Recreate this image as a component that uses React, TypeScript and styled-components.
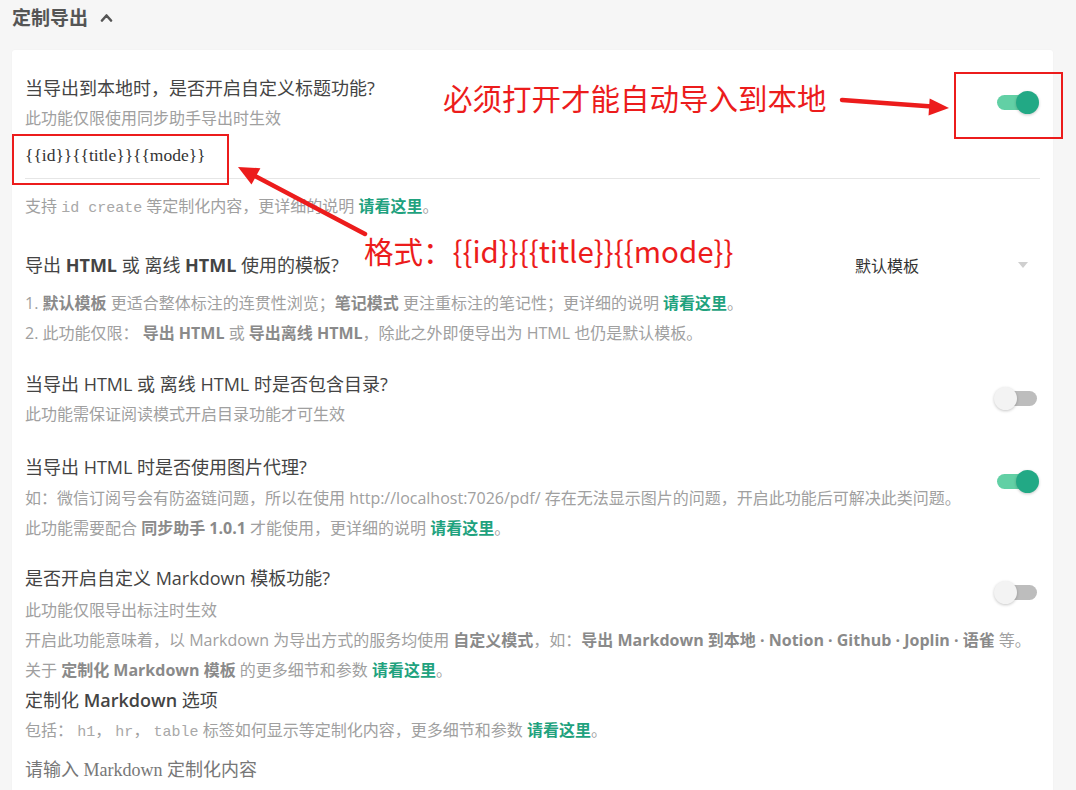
import React from "react";
import styled, { createGlobalStyle } from "styled-components";

const Global = createGlobalStyle`
  html, body { margin: 0; padding: 0; }
  body {
    background: #f6f6f6;
    font-family: "Open Sans", "Noto Sans CJK SC", sans-serif;
    -webkit-font-smoothing: antialiased;
  }
`;

const Page = styled.div`
  position: relative;
  width: 1076px;
  height: 790px;
  overflow: hidden;
`;

const Header = styled.div`
  display: flex;
  align-items: center;
  gap: 12px;
  height: 34px;
  padding: 0 12px;
  font-size: 19px;
  font-weight: 700;
  color: #555;
`;

const Card = styled.div`
  margin: 16px 23px 0 12px;
  padding: 23px 13px 0;
  background: #fff;
  border-radius: 3px;
  box-shadow: 0 0 2px rgba(0, 0, 0, 0.04);
  height: 800px;
`;

const Row = styled.div<{ $gap?: number }>`
  display: flex;
  align-items: flex-start;
  margin-top: ${(p) => p.$gap ?? 0}px;
`;

const Main = styled.div`
  flex: 1;
  min-width: 0;
`;

const Title = styled.div`
  font-size: 18px;
  line-height: 30px;
  color: #444;
  white-space: nowrap;
  b { font-weight: 700; }
`;

const Sub = styled.div<{ $gap?: number }>`
  margin-top: ${(p) => p.$gap ?? 0}px;
  font-size: 16px;
  line-height: 30px;
  color: #a0a0a0;
  white-space: nowrap;
  b { font-weight: 700; color: #8a8a8a; }
`;

const List = styled.ol`
  margin: 8px 0 0;
  padding: 0;
  list-style: none;
`;

const Code = styled.code`
  font-family: "Liberation Mono", "DejaVu Sans Mono", monospace;
  font-size: 15px;
  color: #a8a8a8;
`;

const Link = styled.a`
  color: #1fa27e;
  font-weight: 700;
  text-decoration: none;
`;

const InputLine = styled.div`
  height: 45px;
  display: flex;
  align-items: center;
  border-bottom: 1px solid #e6e6e6;
  font-family: "Liberation Serif", "Noto Sans CJK SC", serif;
  font-size: 17.5px;
  color: #333;
`;

const SwitchBox = styled.div`
  flex: none;
  width: 46px;
  height: 58px;
  padding-right: 3px;
  display: flex;
  align-items: center;
  justify-content: flex-end;
`;

const Track = styled.div<{ $on: boolean }>`
  position: relative;
  width: 40px;
  height: 15px;
  border-radius: 8px;
  background: ${(p) => (p.$on ? "#62d0a5" : "#bdbdbd")};
`;

const Thumb = styled.div<{ $on: boolean }>`
  position: absolute;
  top: 50%;
  left: ${(p) => (p.$on ? "19px" : "-3px")};
  width: 23px;
  height: 23px;
  margin-top: -11.5px;
  border-radius: 50%;
  background: ${(p) => (p.$on ? "#22a985" : "#f3f3f3")};
  box-shadow: 0 1px 3px rgba(0, 0, 0, 0.22);
`;

const SelectBox = styled.div`
  flex: none;
  width: 173px;
  height: 30px;
  display: flex;
  align-items: center;
  justify-content: space-between;
  padding: 0 12px 0 10px;
  font-size: 16px;
  color: #333;
`;

const Caret = styled.span`
  width: 0;
  height: 0;
  border-left: 5px solid transparent;
  border-right: 5px solid transparent;
  border-top: 6px solid #cfcfcf;
`;

const Placeholder = styled.div`
  margin-top: 7px;
  font-family: "Liberation Serif", "Noto Sans CJK SC", serif;
  font-size: 18px;
  line-height: 30px;
  color: #777;
`;

const SubHead = styled(Title)`
  b { font-weight: 600; }
`;

const Mark = styled.div<{ $x: number; $y: number; $w: number; $h: number }>`
  position: absolute;
  left: ${(p) => p.$x}px;
  top: ${(p) => p.$y}px;
  width: ${(p) => p.$w}px;
  height: ${(p) => p.$h}px;
  border: 2px solid #ec1c1c;
  box-sizing: border-box;
  pointer-events: none;
`;

const MarkText = styled.div<{ $x: number; $y: number }>`
  position: absolute;
  left: ${(p) => p.$x}px;
  top: ${(p) => p.$y}px;
  font-family: "Noto Sans CJK SC", sans-serif;
  font-size: 29.5px;
  line-height: 36px;
  color: #ec1c1c;
  white-space: nowrap;
  pointer-events: none;
`;

const ArrowLayer = styled.svg`
  position: absolute;
  left: 0;
  top: 0;
  pointer-events: none;
`;

function Switch({ on }: { on: boolean }) {
  return (
    <SwitchBox>
      <Track $on={on}>
        <Thumb $on={on} />
      </Track>
    </SwitchBox>
  );
}

export default function App() {
  return (
    <Page>
      <Global />
      <Header>
        定制导出
        <svg width="13" height="9" viewBox="0 0 13 9">
          <polyline points="2,7.5 6.5,2.5 11,7.5" fill="none" stroke="#555" strokeWidth="2.6" strokeLinecap="round" strokeLinejoin="round" />
        </svg>
      </Header>
      <Card>
        <Row>
          <Main>
            <Title>当导出到本地时，是否开启自定义标题功能?</Title>
            <Sub>此功能仅限使用同步助手导出时生效</Sub>
          </Main>
          <Switch on />
        </Row>
        <InputLine>{"{{id}}{{title}}{{mode}}"}</InputLine>
        <Sub $gap={12}>
          支持 <Code>id create</Code> 等定制化内容，更详细的说明 <Link>请看这里</Link>。
        </Sub>

        <Row $gap={26}>
          <Main>
            <Title>
              导出 <b>HTML</b> 或 离线 <b>HTML</b> 使用的模板?
            </Title>
            <List>
              <Sub as="li">
                1. <b>默认模板</b> 更适合整体标注的连贯性浏览；<b>笔记模式</b> 更注重标注的笔记性；更详细的说明 <Link>请看这里</Link>。
              </Sub>
              <Sub as="li">
                2. 此功能仅限： <b>导出 HTML</b> 或 <b>导出离线 HTML</b>，除此之外即便导出为 HTML 也仍是默认模板。
              </Sub>
            </List>
          </Main>
          <SelectBox>
            默认模板
            <Caret />
          </SelectBox>
        </Row>

        <Row $gap={21}>
          <Main>
            <Title>当导出 HTML 或 离线 HTML 时是否包含目录?</Title>
            <Sub>此功能需保证阅读模式开启目录功能才可生效</Sub>
          </Main>
          <Switch on={false} />
        </Row>

        <Row $gap={23}>
          <Main>
            <Title>当导出 HTML 时是否使用图片代理?</Title>
            <Sub $gap={1}>如：微信订阅号会有防盗链问题，所以在使用 http://localhost:7026/pdf/ 存在无法显示图片的问题，开启此功能后可解决此类问题。</Sub>
            <Sub>
              此功能需要配合 <b>同步助手 1.0.1</b> 才能使用，更详细的说明 <Link>请看这里</Link>。
            </Sub>
          </Main>
          <Switch on />
        </Row>

        <Row $gap={20}>
          <Main>
            <Title>是否开启自定义 Markdown 模板功能?</Title>
            <Sub $gap={2}>此功能仅限导出标注时生效</Sub>
          </Main>
          <Switch on={false} />
        </Row>
        <Sub>
          开启此功能意味着，以 Markdown 为导出方式的服务均使用 <b>自定义模式</b>，如：<b>导出 Markdown 到本地 · Notion · Github · Joplin · 语雀</b> 等。
        </Sub>
        <Sub>
          关于 <b>定制化 Markdown 模板</b> 的更多细节和参数 <Link>请看这里</Link>。
        </Sub>
        <SubHead>
          定制化 <b>Markdown</b> 选项
        </SubHead>
        <Sub>
          包括： <Code>h1</Code>， <Code>hr</Code>， <Code>table</Code> 标签如何显示等定制化内容，更多细节和参数 <Link>请看这里</Link>。
        </Sub>
        <Placeholder>请输入 Markdown 定制化内容</Placeholder>
      </Card>

      <Mark $x={12} $y={134} $w={217} $h={51} />
      <Mark $x={954} $y={72} $w={109} $h={67} />
      <MarkText $x={443} $y={79}>必须打开才能自动导入到本地</MarkText>
      <MarkText $x={364} $y={232}>{"格式：{{id}}{{title}}{{mode}}"}</MarkText>
      <ArrowLayer width="1076" height="790" viewBox="0 0 1076 790">
        <line x1="842" y1="100" x2="932" y2="106.5" stroke="#ec1c1c" strokeWidth="4.5" strokeLinecap="round" />
        <polygon points="949,108 929.7,98.5 928.5,115.5" fill="#ec1c1c" />
        <line x1="365" y1="234" x2="254" y2="175.5" stroke="#ec1c1c" strokeWidth="4.5" strokeLinecap="round" />
        <polygon points="238,167 260.4,168.2 251.5,184.4" fill="#ec1c1c" />
      </ArrowLayer>
    </Page>
  );
}
